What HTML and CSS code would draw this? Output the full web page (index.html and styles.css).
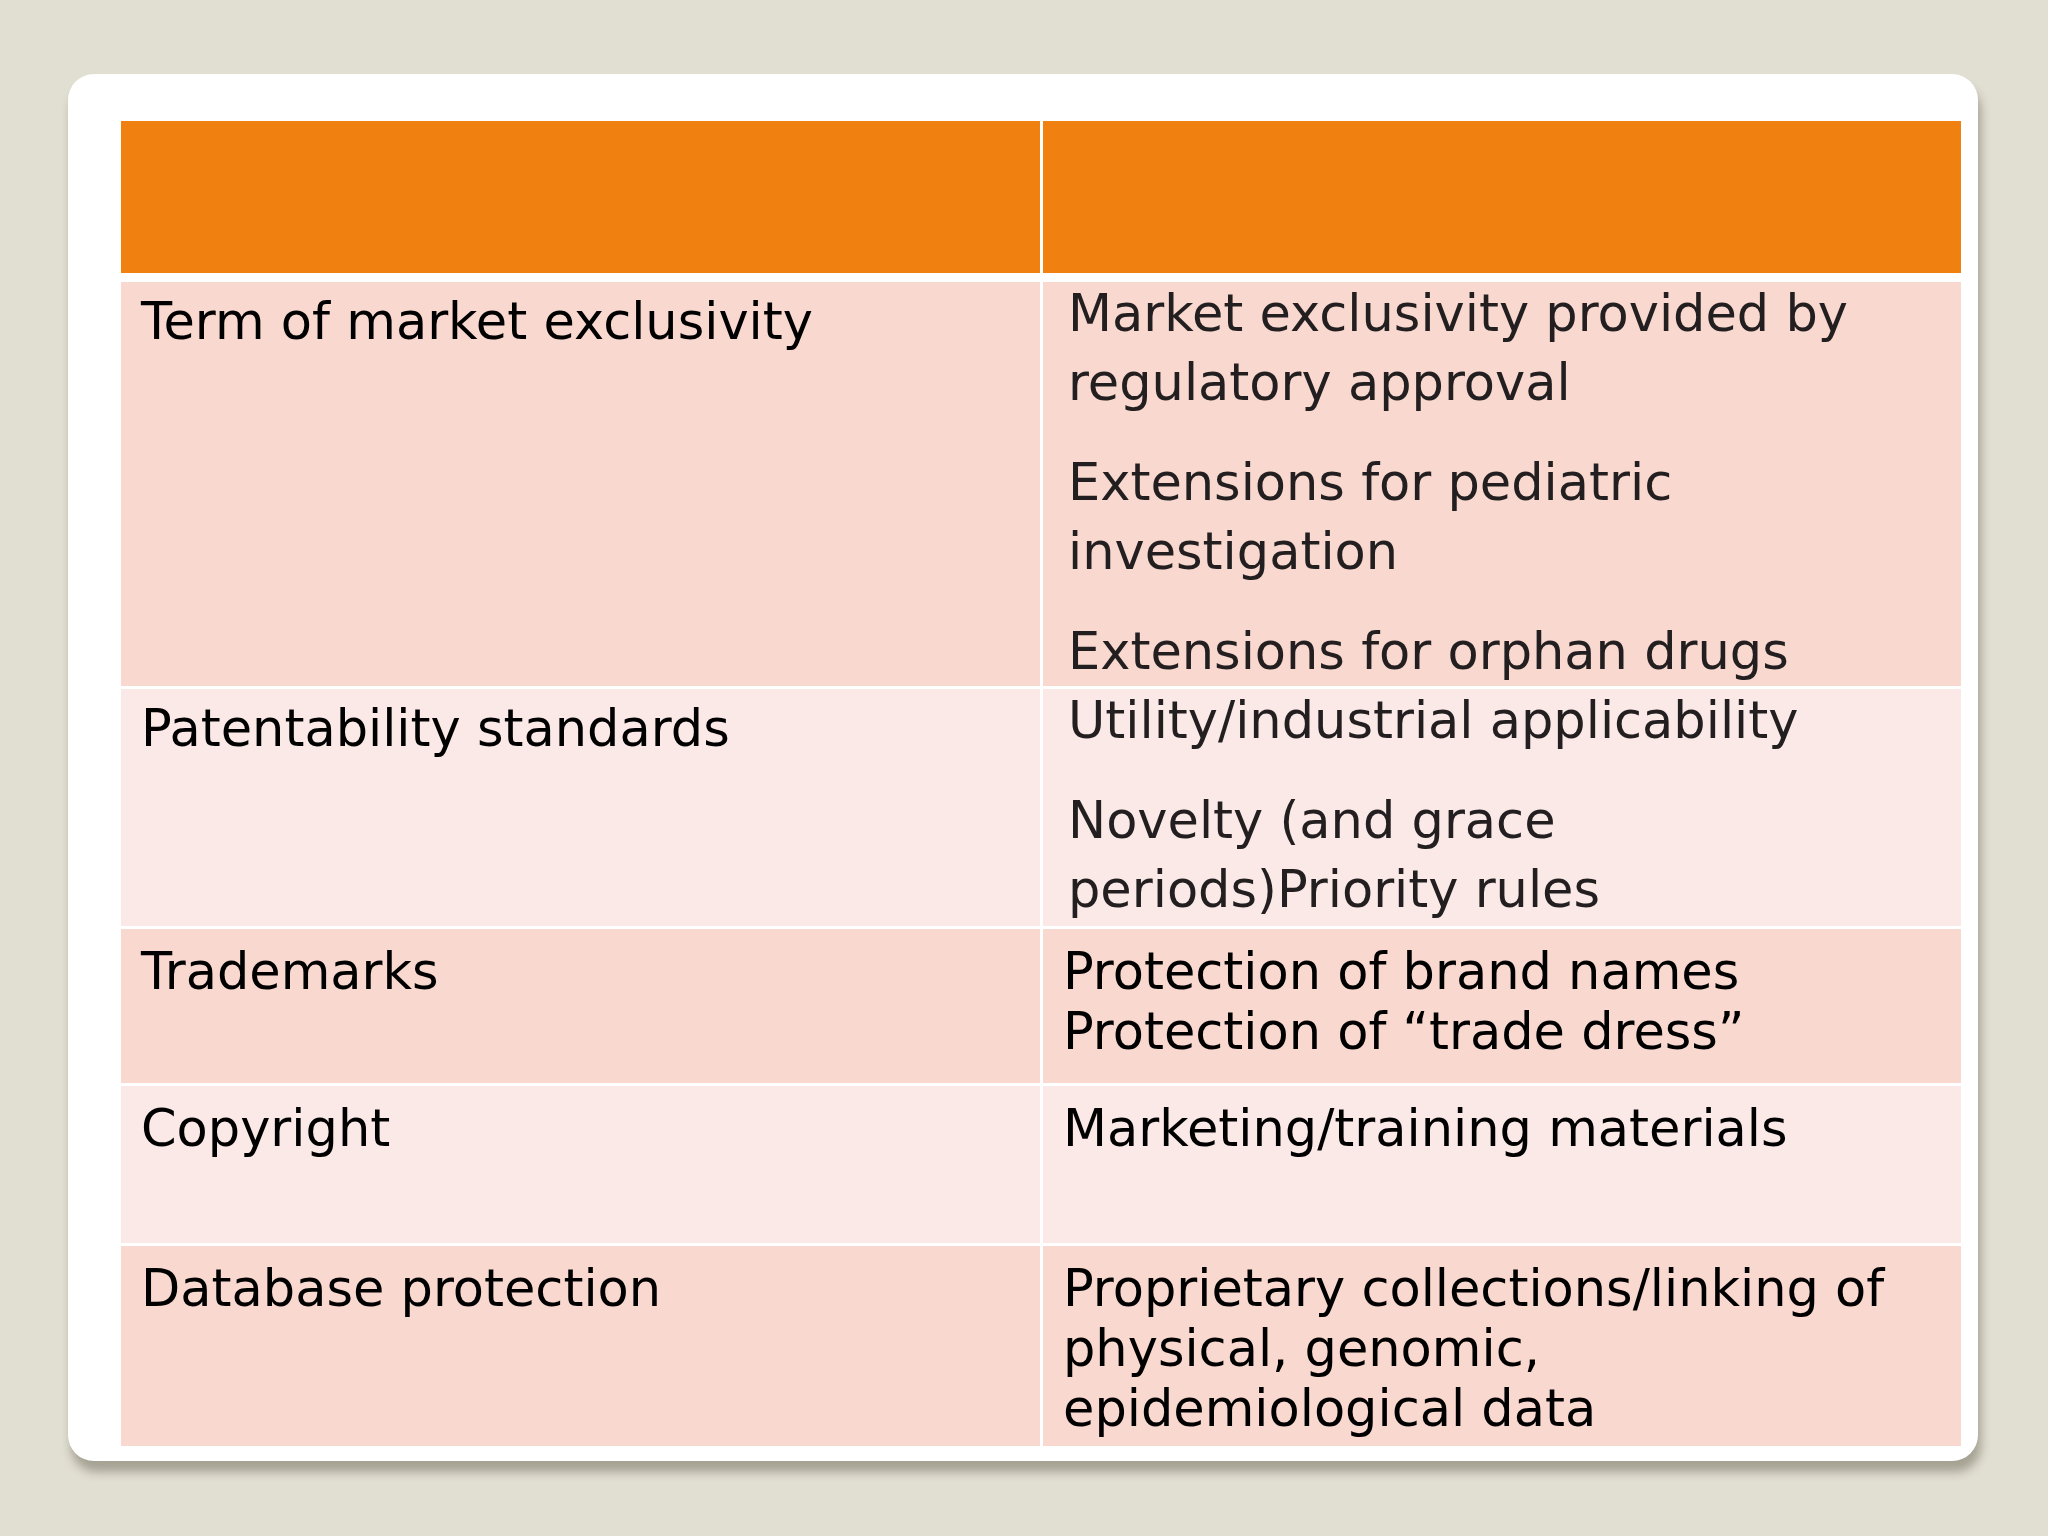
FILE: index.html
```html
<!DOCTYPE html>
<html lang="en">
<head>
<meta charset="utf-8">
<title>Market exclusivity table</title>
<link rel="stylesheet" href="styles.css">
</head>
<body>
<div class="slide">
  <div class="table">
    <div class="cell head"></div>
    <div class="cell head"></div>

    <div class="cell dark left tall">Term of market exclusivity</div>
    <div class="cell dark right tall">
      <p>Market exclusivity provided by regulatory approval</p>
      <p>Extensions for pediatric investigation</p>
      <p>Extensions for orphan drugs</p>
    </div>

    <div class="cell light left tall">Patentability standards</div>
    <div class="cell light right tall">
      <p>Utility/industrial applicability</p>
      <p>Novelty (and grace periods)Priority rules</p>
    </div>

    <div class="cell dark left">Trademarks</div>
    <div class="cell dark right compact">Protection of brand names<br>Protection of “trade dress”</div>

    <div class="cell light left">Copyright</div>
    <div class="cell light right compact">Marketing/training materials</div>

    <div class="cell dark left">Database protection</div>
    <div class="cell dark right compact">Proprietary collections/linking of physical, genomic, epidemiological data</div>
  </div>
</div>
</body>
</html>
```

FILE: styles.css
```css
html, body {
  margin: 0;
  padding: 0;
}

body {
  background: #e1ded2;
  width: 2048px;
  height: 1536px;
  overflow: hidden;
  font-family: "DejaVu Sans", Verdana, sans-serif;
}

.slide {
  margin: 74px 0 0 68px;
  width: 1910px;
  height: 1387px;
  box-sizing: border-box;
  padding: 47px 17px 15px 53px;
  background: #ffffff;
  border-radius: 26px;
  box-shadow: 3px 11px 10px rgba(60, 58, 40, 0.36);
}

.table {
  display: grid;
  grid-template-columns: 919px 918px;
  grid-template-rows: 158px 404px 237px 154px 157px 200px;
  column-gap: 3px;
  row-gap: 3px;
}

.cell {
  box-sizing: border-box;
  overflow: visible;
  font-size: 51px;
  color: #000;
}

.head {
  background: #f08010;
  height: 152px;
}

.dark {
  background: #f8d8cf;
}

.light {
  background: #fbe9e7;
}

.left {
  padding: 13px 20px 0 20px;
  line-height: 60px;
}

.left.tall {
  padding-top: 10px;
}

.right {
  padding: 0 20px 0 20px;
}

.right.tall {
  padding-left: 25px;
  color: #231f20;
}

.right.tall p {
  margin: 0 0 31px 0;
  line-height: 69px;
}

.right.tall p:first-child {
  margin-top: -3px;
}

.right.compact {
  padding-top: 13px;
  line-height: 60px;
}
```
